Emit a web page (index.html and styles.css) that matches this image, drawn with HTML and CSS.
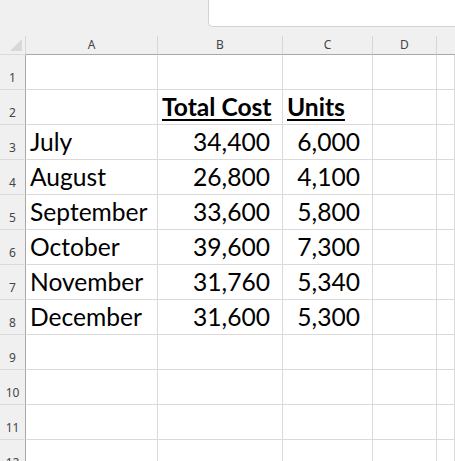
FILE: index.html
```html
<!DOCTYPE html>
<html>
<head>
<meta charset="utf-8">
<link rel="stylesheet" href="styles.css">
</head>
<body>
<div class="topbar">
  <div class="namebox"></div>
</div>
<div class="sheet">
  <div class="corner"><span class="tri"></span></div>
  <div class="colhead">A</div>
  <div class="colhead">B</div>
  <div class="colhead">C</div>
  <div class="colhead">D</div>
  <div class="colhead last"></div>

  <div class="rowhead">1</div><div class="cell"></div><div class="cell"></div><div class="cell"></div><div class="cell"></div><div class="cell"></div>
  <div class="rowhead">2</div><div class="cell"></div><div class="cell hdr"><span>Total Cost</span></div><div class="cell hdr"><span>Units</span></div><div class="cell"></div><div class="cell"></div>
  <div class="rowhead">3</div><div class="cell">July</div><div class="cell num">34,400</div><div class="cell num">6,000</div><div class="cell"></div><div class="cell"></div>
  <div class="rowhead">4</div><div class="cell">August</div><div class="cell num">26,800</div><div class="cell num">4,100</div><div class="cell"></div><div class="cell"></div>
  <div class="rowhead">5</div><div class="cell">September</div><div class="cell num">33,600</div><div class="cell num">5,800</div><div class="cell"></div><div class="cell"></div>
  <div class="rowhead">6</div><div class="cell">October</div><div class="cell num">39,600</div><div class="cell num">7,300</div><div class="cell"></div><div class="cell"></div>
  <div class="rowhead">7</div><div class="cell">November</div><div class="cell num">31,760</div><div class="cell num">5,340</div><div class="cell"></div><div class="cell"></div>
  <div class="rowhead">8</div><div class="cell">December</div><div class="cell num">31,600</div><div class="cell num">5,300</div><div class="cell"></div><div class="cell"></div>
  <div class="rowhead">9</div><div class="cell"></div><div class="cell"></div><div class="cell"></div><div class="cell"></div><div class="cell"></div>
  <div class="rowhead">10</div><div class="cell"></div><div class="cell"></div><div class="cell"></div><div class="cell"></div><div class="cell"></div>
  <div class="rowhead">11</div><div class="cell"></div><div class="cell"></div><div class="cell"></div><div class="cell"></div><div class="cell"></div>
  <div class="rowhead">12</div><div class="cell"></div><div class="cell"></div><div class="cell"></div><div class="cell"></div><div class="cell"></div>
</div>
</body>
</html>
```

FILE: styles.css
```css
html, body {
  margin: 0;
  padding: 0;
  width: 455px;
  height: 461px;
  overflow: hidden;
  background: #ffffff;
}

.topbar {
  height: 36px;
  background: #f0f0f0;
  display: flex;
  justify-content: flex-end;
  align-items: flex-start;
}

.namebox {
  width: 250px;
  margin-right: -3px;
  height: 27px;
  box-sizing: border-box;
  background: #ffffff;
  border-left: 1px solid #d2d2d2;
  border-bottom: 1px solid #d2d2d2;
  border-bottom-left-radius: 5px;
}

.sheet {
  display: grid;
  grid-template-columns: 26px 132px 125px 90px 64px 1fr;
  grid-template-rows: 19px;
  grid-auto-rows: 35px;
}

.sheet > div {
  box-sizing: border-box;
}

.corner {
  background: #f0f0f0;
  border-right: 1px solid #d6d6d6;
  border-bottom: 1px solid #dcdcdc;
  position: relative;
}

.tri {
  position: absolute;
  left: 10px;
  top: 3px;
  width: 0;
  height: 0;
  border-left: 12px solid transparent;
  border-bottom: 12px solid #d8d8d8;
}

.colhead {
  background: #f0f0f0;
  border-right: 1px solid #d6d6d6;
  border-bottom: 1px solid #a8a8a8;
  display: flex;
  align-items: center;
  justify-content: center;
  font-family: "Noto Sans", "Open Sans", sans-serif;
  font-size: 12px;
  line-height: 1;
  color: #444444;
}

.colhead.last {
  border-right: none;
}

.rowhead {
  background: #f0f0f0;
  border-right: 1px solid #a8a8a8;
  border-bottom: 1px solid #dadada;
  display: flex;
  align-items: flex-end;
  justify-content: center;
  padding-bottom: 5px;
  font-family: "Noto Sans", "Open Sans", sans-serif;
  font-size: 12px;
  line-height: 1;
  color: #444444;
}

.cell {
  border-right: 1px solid #dadada;
  border-bottom: 1px solid #dadada;
  display: flex;
  align-items: flex-end;
  padding: 0 4px 4px 4px;
  font-family: Lato, "Liberation Sans", sans-serif;
  font-size: 24.6px;
  line-height: 1;
  color: #000000;
  white-space: nowrap;
}

.cell.num {
  justify-content: flex-end;
  padding-right: 12px;
}

.cell.hdr {
  font-weight: 700;
}

.cell.hdr span {
  text-decoration: underline;
  text-decoration-thickness: 2px;
  text-underline-offset: 3px;
}
```
